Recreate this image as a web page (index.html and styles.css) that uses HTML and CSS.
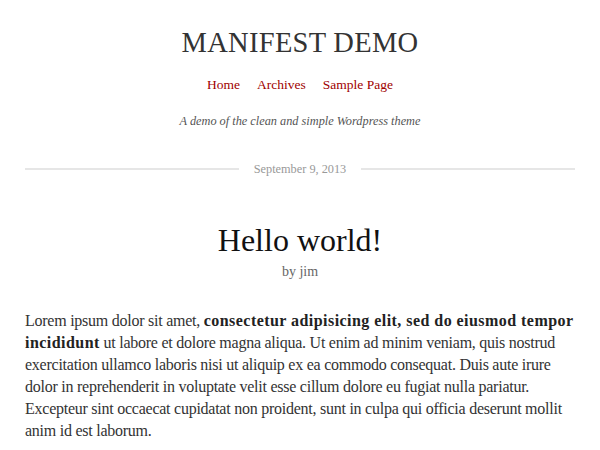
FILE: index.html
```html
<!DOCTYPE html>
<html>
<head>
<meta charset="utf-8">
<link rel="stylesheet" href="styles.css">
</head>
<body>
<div class="page">
  <header class="site-header">
    <h1 class="site-title">MANIFEST DEMO</h1>
    <nav class="site-nav">
      <a href="#">Home</a>
      <a href="#">Archives</a>
      <a href="#">Sample Page</a>
    </nav>
    <p class="tagline">A demo of the clean and simple Wordpress theme</p>
  </header>
  <div class="date-rule">
    <span class="rule"></span>
    <span class="date">September 9, 2013</span>
    <span class="rule"></span>
  </div>
  <article class="post">
    <h2 class="post-title">Hello world!</h2>
    <p class="byline">by jim</p>
    <p class="post-body">Lorem ipsum dolor sit amet, <strong>consectetur adipisicing elit, sed do eiusmod tempor incididunt</strong> ut labore et dolore magna aliqua. Ut enim ad minim veniam, quis nostrud exercitation ullamco laboris nisi ut aliquip ex ea commodo consequat. Duis aute irure dolor in reprehenderit in voluptate velit esse cillum dolore eu fugiat nulla pariatur. Excepteur sint occaecat cupidatat non proident, sunt in culpa qui officia deserunt mollit anim id est laborum.</p>
  </article>
</div>
</body>
</html>
```
FILE: styles.css
```css
html, body {
  margin: 0;
  padding: 0;
  background: #fff;
}
.page {
  padding: 0 25px;
  font-family: "Liberation Serif", serif;
  color: #333;
}
.site-header {
  text-align: center;
  padding-top: 27px;
}
.site-title {
  margin: 0;
  font-weight: normal;
  font-size: 28.5px;
  line-height: 32px;
  color: #333;
  letter-spacing: 0.3px;
}
.site-nav {
  margin-top: 17px;
  display: flex;
  justify-content: center;
  gap: 17px;
  font-size: 13.5px;
  line-height: 18px;
}
.site-nav a {
  color: #a00000;
  text-decoration: none;
}
.tagline {
  margin: 19px 0 0;
  font-size: 12.3px;
  line-height: 16px;
  font-style: italic;
  color: #555;
}
.date-rule {
  margin-top: 32px;
  display: flex;
  align-items: center;
  gap: 15px;
}
.rule {
  flex: 1;
  height: 2px;
  background: #e6e6e6;
}
.date {
  font-size: 12.3px;
  line-height: 16px;
  color: #999;
}
.post {
  text-align: left;
}
.post-title {
  margin: 44px 0 0;
  text-align: center;
  font-weight: normal;
  font-size: 32px;
  line-height: 38px;
  color: #111;
}
.byline {
  margin: 4px 0 0;
  text-align: center;
  font-size: 14px;
  line-height: 18px;
  color: #666;
}
.post-body {
  margin: 29px 0 0;
  font-size: 16px;
  line-height: 22px;
  letter-spacing: -0.25px;
  color: #333;
}
.post-body strong {
  font-weight: bold;
  letter-spacing: 0.45px;
  color: #222;
}
```
